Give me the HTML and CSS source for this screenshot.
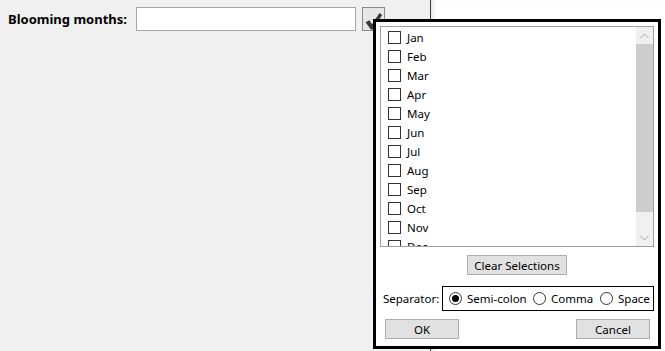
FILE: index.html
```html
<!DOCTYPE html>
<html>
<head>
<meta charset="utf-8">
<link rel="stylesheet" href="styles.css">
</head>
<body>
<div class="screen">
  <div class="window">
    <div class="form-row">
      <span class="label">Blooming months:</span>
      <div class="textbox"></div>
      <div class="drop-btn">
        <svg width="19" height="20" viewBox="0 0 18 18"><path d="M1.5 10.2 L5 8.2 L7.6 12 L14.6 1.5 L17.2 3.2 L8.4 17 L6.4 17 Z" fill="#3a3a3a"/></svg>
      </div>
    </div>
  </div>
  <div class="desktop"></div>
</div>

<div class="popup">
  <div class="list">
    <div class="items">
      <div class="item"><span class="cb"></span>Jan</div>
      <div class="item"><span class="cb"></span>Feb</div>
      <div class="item"><span class="cb"></span>Mar</div>
      <div class="item"><span class="cb"></span>Apr</div>
      <div class="item"><span class="cb"></span>May</div>
      <div class="item"><span class="cb"></span>Jun</div>
      <div class="item"><span class="cb"></span>Jul</div>
      <div class="item"><span class="cb"></span>Aug</div>
      <div class="item"><span class="cb"></span>Sep</div>
      <div class="item"><span class="cb"></span>Oct</div>
      <div class="item"><span class="cb"></span>Nov</div>
      <div class="item"><span class="cb"></span>Dec</div>
    </div>
    <div class="scrollbar">
      <div class="arrow">
        <svg width="9" height="6" viewBox="0 0 9 6"><path d="M0.5 5 L4.5 1 L8.5 5" fill="none" stroke="#a3a3a3" stroke-width="1"/></svg>
      </div>
      <div class="thumb"></div>
      <div class="track"></div>
      <div class="arrow">
        <svg width="9" height="6" viewBox="0 0 9 6"><path d="M0.5 1 L4.5 5 L8.5 1" fill="none" stroke="#a3a3a3" stroke-width="1"/></svg>
      </div>
    </div>
  </div>
  <div class="clear-row">
    <div class="btn clear-btn">Clear Selections</div>
  </div>
  <div class="sep-row">
    <span class="sep-label">Separator:</span>
    <div class="group">
      <span class="radio-opt opt-semi"><span class="radio on"></span>Semi-colon</span>
      <span class="radio-opt opt-comma"><span class="radio"></span>Comma</span>
      <span class="radio-opt"><span class="radio"></span>Space</span>
    </div>
  </div>
  <div class="btn-row">
    <div class="btn ok-btn">OK</div>
    <div class="btn cancel-btn">Cancel</div>
  </div>
</div>
</body>
</html>
```

FILE: styles.css
```css
* { box-sizing: border-box; }
html, body {
  margin: 0;
  padding: 0;
  width: 665px;
  height: 351px;
  overflow: hidden;
  font-family: "Segoe UI", "Noto Sans", "Open Sans", sans-serif;
  font-size: 11.5px;
  color: #000;
}
.screen {
  display: flex;
  height: 351px;
}
.window {
  width: 431px;
  background: #f0f0f0;
  border-right: 1px solid #3c3c3c;
}
.desktop {
  flex: 1;
  background: #ffffff;
  box-shadow: inset 4px 0 4px -2px rgba(0,0,0,0.12);
}
.form-row {
  display: flex;
  align-items: center;
  padding: 7px 0 0 8px;
}
.label {
  font-weight: bold;
  font-size: 13px;
  width: 128px;
  white-space: nowrap;
}
.textbox {
  width: 220px;
  height: 24px;
  background: #fff;
  border: 1px solid #a6a6a6;
}
.drop-btn {
  margin-left: 6px;
  width: 23px;
  height: 24px;
  background: #e6e6e6;
  border: 1px solid #8a8a8a;
  display: flex;
  align-items: center;
  justify-content: center;
  padding-top: 3px;
}
.popup {
  position: absolute;
  left: 373px;
  top: 19px;
  width: 288px;
  height: 330px;
  background: #fff;
  border: 3px solid #000;
  padding: 4px;
  display: flex;
  flex-direction: column;
}
.list {
  height: 221px;
  border: 1px solid #a0a0a0;
  display: flex;
  overflow: hidden;
}
.items {
  flex: 1;
  padding: 1px 0 0 7px;
  overflow: hidden;
}
.item {
  height: 19px;
  display: flex;
  align-items: center;
  white-space: nowrap;
}
.cb {
  width: 13px;
  height: 13px;
  border: 1px solid #333;
  background: #fff;
  margin-right: 6px;
  flex: none;
}
.scrollbar {
  width: 17px;
  background: #f0f0f0;
  display: flex;
  flex-direction: column;
}
.arrow {
  height: 17px;
  display: flex;
  align-items: center;
  justify-content: center;
  flex: none;
}
.thumb {
  height: 168px;
  background: #cdcdcd;
  flex: none;
}
.track { flex: 1; }
.btn {
  background: #e1e1e1;
  border: 1px solid #adadad;
  display: flex;
  align-items: center;
  justify-content: center;
  height: 20px;
  white-space: nowrap;
}
.clear-row {
  display: flex;
  justify-content: center;
  margin-top: 8px;
}
.clear-btn { width: 100px; }
.sep-row {
  display: flex;
  align-items: center;
  margin-top: 11px;
  padding-left: 3px;
}
.sep-label { width: 59px; white-space: nowrap; }
.group {
  flex: 1;
  height: 25px;
  border: 1px solid #000;
  display: flex;
  align-items: center;
  padding-left: 6px;
}
.radio-opt {
  display: flex;
  align-items: center;
  white-space: nowrap;
  flex: none;
}
.opt-semi { width: 84px; }
.opt-comma { width: 67px; }
.radio {
  width: 13px;
  height: 13px;
  border: 1px solid #333;
  border-radius: 50%;
  margin-right: 5px;
  display: flex;
  align-items: center;
  justify-content: center;
  flex: none;
}
.radio.on::after {
  content: "";
  width: 7px;
  height: 7px;
  border-radius: 50%;
  background: #000;
}
.btn-row {
  display: flex;
  justify-content: space-between;
  margin-top: 8px;
  padding: 0 4px 0 5px;
}
.ok-btn, .cancel-btn { width: 74px; }
```
